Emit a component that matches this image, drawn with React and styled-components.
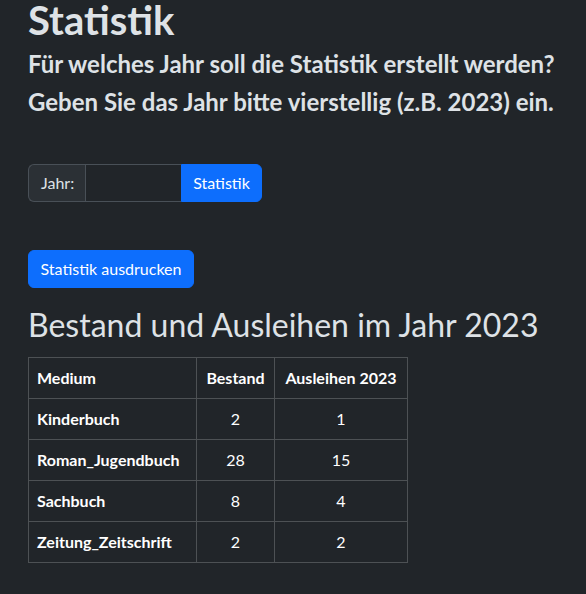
import React from "react";
import styled, { createGlobalStyle } from "styled-components";

const Global = createGlobalStyle`
  body {
    margin: 0;
    background: #212529;
    color: #dee2e6;
    font-family: "Lato", "Liberation Sans", sans-serif;
    font-size: 16px;
    line-height: 1.5;
  }
`;

const Main = styled.main`
  padding: 0 28px;
`;

const Title = styled.h1`
  font-size: 40px;
  font-weight: 700;
  line-height: 40px;
  margin: 0 0 10px;
`;

const Lead = styled.h4`
  font-size: 24px;
  font-weight: 700;
  line-height: 28.8px;
  margin: 0 0 9px;
  white-space: nowrap;
`;

const InputGroup = styled.form`
  display: flex;
  height: 38px;
  margin-top: 47px;
`;

const GroupLabel = styled.span`
  display: flex;
  align-items: center;
  box-sizing: border-box;
  width: 57px;
  padding: 0 12px;
  background: #2b3035;
  border: 1px solid #495057;
  border-right: none;
  border-radius: 6px 0 0 6px;
`;

const YearInput = styled.input`
  box-sizing: border-box;
  width: 96px;
  background: #212529;
  color: #dee2e6;
  border: 1px solid #495057;
  border-right: none;
  padding: 0 12px;
  font: inherit;
  outline: none;
`;

const Button = styled.button`
  box-sizing: border-box;
  height: 38px;
  width: ${(p) => p.$width}px;
  background: #0d6efd;
  color: #fff;
  border: 1px solid #0d6efd;
  border-radius: ${(p) => (p.$attached ? "0 6px 6px 0" : "6px")};
  font-family: inherit;
  font-size: 16px;
  padding: 0;
  cursor: pointer;
`;

const PrintRow = styled.div`
  margin-top: 48px;
`;

const SubTitle = styled.h2`
  font-size: 32px;
  font-weight: 400;
  line-height: 38.4px;
  margin: 18px 0 8px;
`;

const Table = styled.table`
  border-collapse: collapse;
  margin-top: 13px;
  color: #fff;
  font-size: 16px;
`;

const Cell = styled.td`
  box-sizing: border-box;
  height: 41px;
  padding: 8px;
  border: 1px solid #4d5154;
  font-weight: ${(p) => (p.$bold ? 700 : 400)};
  text-align: ${(p) => p.$align || "left"};
  width: ${(p) => (p.$width ? p.$width + "px" : "auto")};
  white-space: nowrap;
`;

const rows = [
  ["Kinderbuch", 2, 1],
  ["Roman_Jugendbuch", 28, 15],
  ["Sachbuch", 8, 4],
  ["Zeitung_Zeitschrift", 2, 2],
];

export default function App() {
  return (
    <>
      <Global />
      <Main>
        <Title>Statistik</Title>
        <Lead>Für welches Jahr soll die Statistik erstellt werden?</Lead>
        <Lead>Geben Sie das Jahr bitte vierstellig (z.B. 2023) ein.</Lead>
        <InputGroup onSubmit={(e) => e.preventDefault()}>
          <GroupLabel>Jahr:</GroupLabel>
          <YearInput type="text" />
          <Button $width={81} $attached>Statistik</Button>
        </InputGroup>
        <PrintRow>
          <Button $width={166}>Statistik ausdrucken</Button>
        </PrintRow>
        <SubTitle>Bestand und Ausleihen im Jahr 2023</SubTitle>
        <Table>
          <thead>
            <tr>
              <Cell as="th" $bold $width={168}>Medium</Cell>
              <Cell as="th" $bold $align="center" $width={78}>Bestand</Cell>
              <Cell as="th" $bold $align="center" $width={133}>Ausleihen 2023</Cell>
            </tr>
          </thead>
          <tbody>
            {rows.map(([name, stock, loans]) => (
              <tr key={name}>
                <Cell as="th" $bold>{name}</Cell>
                <Cell $align="center">{stock}</Cell>
                <Cell $align="center">{loans}</Cell>
              </tr>
            ))}
          </tbody>
        </Table>
      </Main>
    </>
  );
}
